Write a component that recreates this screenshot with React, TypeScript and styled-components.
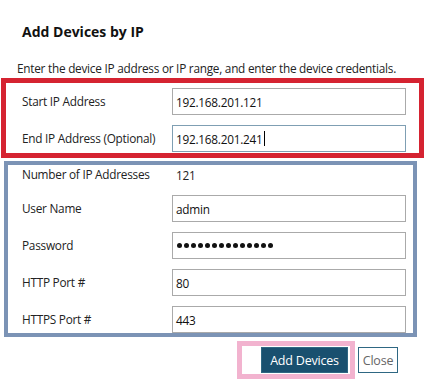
import React from 'react';
import styled, { createGlobalStyle } from 'styled-components';

const GlobalStyle = createGlobalStyle`
  html, body {
    margin: 0;
    padding: 0;
    background: #ffffff;
  }
  body {
    font-family: 'Open Sans', 'Noto Sans', sans-serif;
    color: #1b1b1b;
  }
`;

const Dialog = styled.div`
  width: 427px;
  height: 392px;
  box-sizing: border-box;
  padding: 22px 0 0 1px;
  background: #fff;
`;

const Title = styled.h2`
  margin: 0 0 18px 21px;
  font-size: 14px;
  line-height: 20px;
  font-weight: 700;
  color: #111;
`;

const Description = styled.p`
  margin: 0 0 2px 16px;
  font-size: 11.8px;
  letter-spacing: -0.25px;
  line-height: 16px;
  color: #222;
`;

interface GroupProps {
  $color: string;
  $width: number;
  $border: number;
  $offset: number;
  $inset: number;
  $padTop: number;
  $padBottom: number;
}

const Group = styled.div<GroupProps>`
  box-sizing: border-box;
  width: ${({ $width }) => $width}px;
  margin-left: ${({ $offset }) => $offset}px;
  border: ${({ $border, $color }) => `${$border}px solid ${$color}`};
  padding: ${({ $padTop, $padBottom, $inset }) =>
    `${$padTop}px 0 ${$padBottom}px ${$inset}px`};
  display: flex;
  flex-direction: column;
  gap: 10px;
`;

const Row = styled.div`
  display: grid;
  grid-template-columns: 150px 234px;
  align-items: center;
`;

const Label = styled.span`
  font-size: 11.8px;
  letter-spacing: -0.25px;
  line-height: 16px;
  color: #222;
  margin-top: -2px;
`;

const Value = styled.span`
  padding-left: 4px;
  font-size: 11.8px;
  letter-spacing: -0.25px;
  line-height: 20px;
  color: #222;
`;

const Field = styled.div<{ $focused?: boolean }>`
  box-sizing: border-box;
  height: 27px;
  border: 1px solid ${({ $focused }) => ($focused ? '#7f9fb3' : '#aaaaaa')};
  padding: 0 3px;
  display: flex;
  align-items: center;
  font-size: 11.8px;
  letter-spacing: -0.25px;
  color: #111;
  background: #fff;
`;

const Caret = styled.span`
  display: inline-block;
  width: 1px;
  height: 15px;
  background: #000;
  margin-left: 1px;
`;

const Dots = styled.div`
  display: flex;
  gap: 2px;
  padding-left: 1px;
`;

const Dot = styled.span`
  width: 5px;
  height: 5px;
  border-radius: 50%;
  background: #111;
`;

const Footer = styled.div`
  display: flex;
  justify-content: flex-end;
  align-items: flex-start;
  margin-top: 4px;
  padding-right: 29px;
`;

const Highlight = styled.div`
  border: 5px solid #f2b3cf;
  padding: 1px 2px 1px 19px;
`;

const Button = styled.button<{ $primary?: boolean }>`
  box-sizing: border-box;
  height: 26px;
  padding: 0;
  font-family: inherit;
  font-size: 12.5px;
  letter-spacing: -0.2px;
  cursor: pointer;
  border: 1px solid #2e6783;
  background: ${({ $primary }) => ($primary ? '#19506f' : '#ffffff')};
  color: ${({ $primary }) => ($primary ? '#ffffff' : '#666666')};
`;

const AddButton = styled(Button)`
  width: 87px;
`;

const CloseButton = styled(Button)`
  width: 40px;
  margin: 6px 0 0 3px;
`;

const FormRow = ({ label, children }: { label: string; children: React.ReactNode }) => (
  <Row>
    <Label>{label}</Label>
    {children}
  </Row>
);

export default function App() {
  return (
    <>
      <GlobalStyle />
      <Dialog>
        <Title>Add Devices by IP</Title>
        <Description>
          Enter the device IP address or IP range, and enter the device credentials.
        </Description>

        <Group $color="#d52331" $width={423} $border={5} $offset={0} $inset={16} $padTop={5} $padBottom={1}>
          <FormRow label="Start IP Address">
            <Field>192.168.201.121</Field>
          </FormRow>
          <FormRow label="End IP Address (Optional)">
            <Field $focused>
              192.168.201.241
              <Caret />
            </Field>
          </FormRow>
        </Group>

        <Group $color="#7b93b5" $width={413} $border={4} $offset={3} $inset={14} $padTop={0} $padBottom={0} style={{ marginTop: 3 }}>
          <Row>
            <Label>Number of IP Addresses</Label>
            <Value>121</Value>
          </Row>
          <FormRow label="User Name">
            <Field>admin</Field>
          </FormRow>
          <FormRow label="Password">
            <Field>
              <Dots>
                {Array.from({ length: 14 }).map((_, i) => (
                  <Dot key={i} />
                ))}
              </Dots>
            </Field>
          </FormRow>
          <FormRow label="HTTP Port #">
            <Field>80</Field>
          </FormRow>
          <FormRow label="HTTPS Port #">
            <Field>443</Field>
          </FormRow>
        </Group>

        <Footer>
          <Highlight>
            <AddButton $primary>Add Devices</AddButton>
          </Highlight>
          <CloseButton>Close</CloseButton>
        </Footer>
      </Dialog>
    </>
  );
}
